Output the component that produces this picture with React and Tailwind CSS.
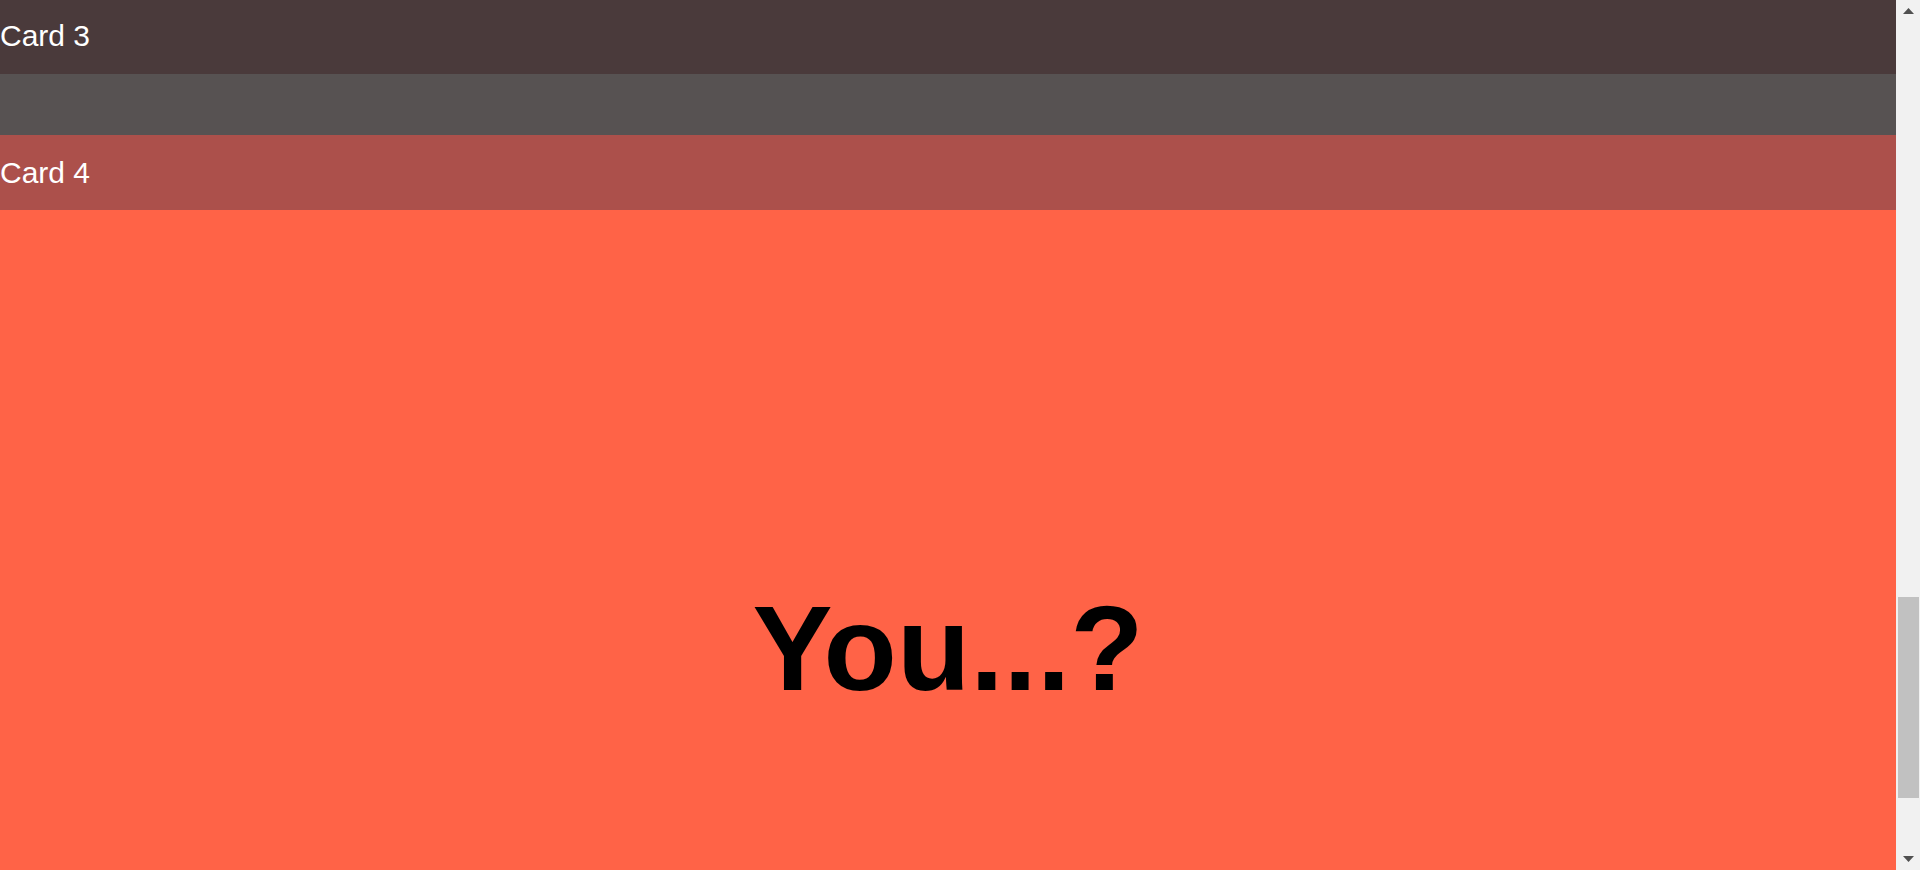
import React from "react";

const Arrow = ({ down }) => (
  <svg width="11" height="6" viewBox="0 0 11 6" className={down ? "rotate-180" : ""}>
    <polygon points="5.5,0 11,6 0,6" fill="#505050" />
  </svg>
);

const App = () => {
  return (
    <div className="flex h-screen overflow-hidden font-['Liberation_Sans',Arial,sans-serif]">
      {/* Page content, captured part-way down the scroll */}
      <main className="flex-1 flex flex-col overflow-hidden text-white">
        <h2 className="shrink-0 h-[74px] bg-[#4a3a3b] pt-[18px] text-[30px] leading-[35px] font-normal">
          Card 3
        </h2>
        <div className="shrink-0 h-[61px] bg-[#575252]"></div>
        <h2 className="shrink-0 h-[75px] bg-[#ac504b] pt-5 text-[30px] leading-[35px] font-normal">
          Card 4
        </h2>
        <section className="shrink-0 h-[870px] bg-[#ff6347] flex items-center justify-center pt-[6px]">
          <h1 className="text-black text-[120px] font-bold leading-[normal]">You...?</h1>
        </section>
      </main>

      {/* Scrollbar */}
      <aside className="w-[24px] shrink-0 bg-[#f1f1f1] flex flex-col">
        <div className="h-[22px] flex items-center justify-center">
          <Arrow />
        </div>
        <div className="flex-1 pt-[575px]">
          <div className="h-[201px] ml-[2px] mr-[1px] bg-[#c1c1c1]"></div>
        </div>
        <div className="h-[22px] flex items-center justify-center">
          <Arrow down />
        </div>
      </aside>
    </div>
  );
};

export default App;
